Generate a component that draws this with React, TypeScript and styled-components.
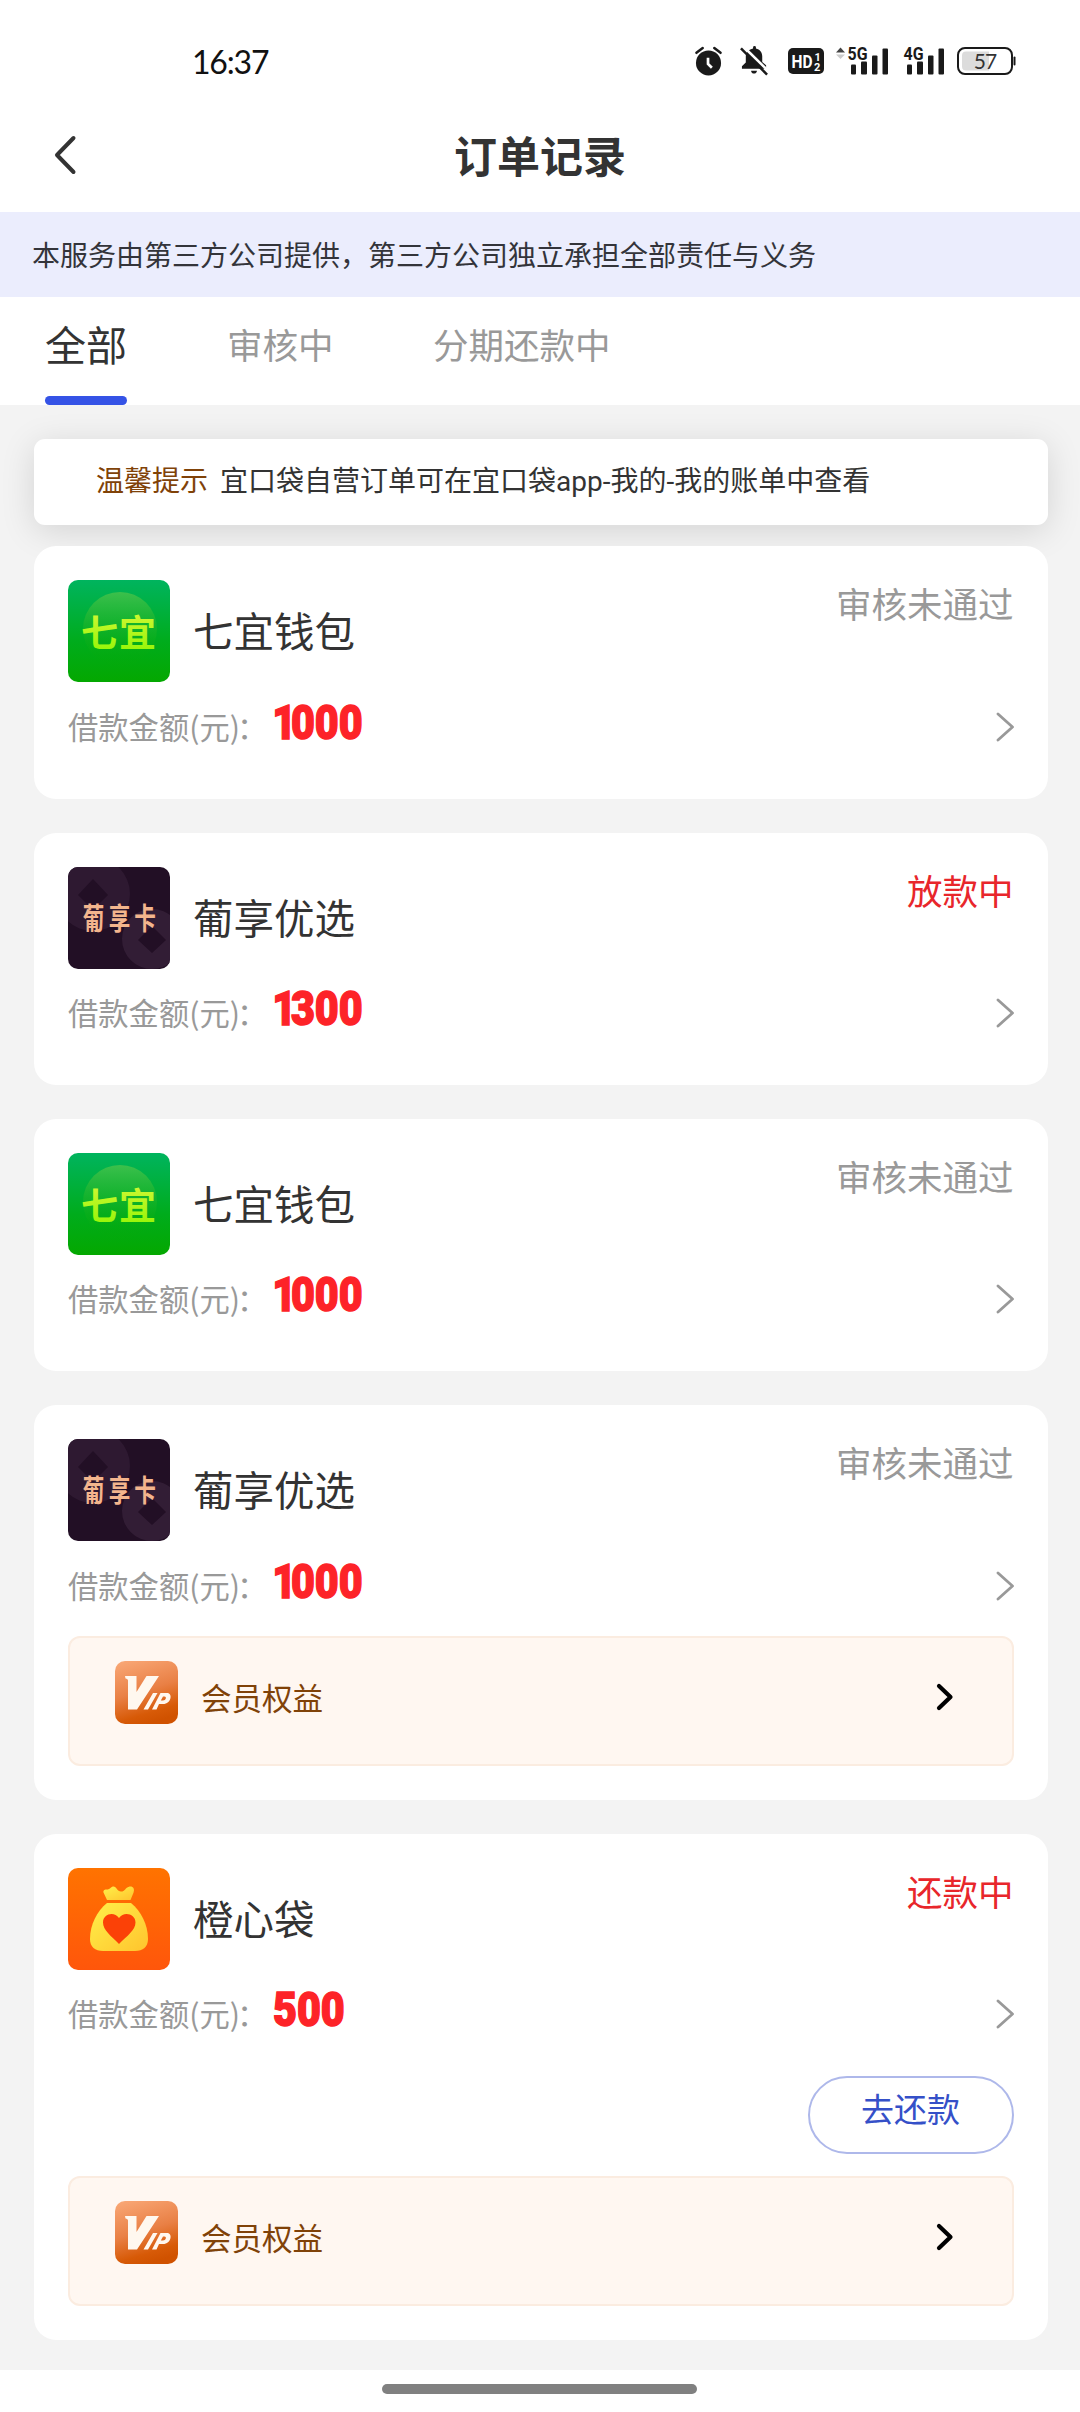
import React from 'react';
import styled, { createGlobalStyle } from 'styled-components';

const FONT = '"Noto Sans CJK SC", "Noto Sans", sans-serif';

const GlobalStyle = createGlobalStyle`
  * { box-sizing: border-box; }
  html, body { margin: 0; padding: 0; background: #fff; }
  body { font-family: ${FONT}; color: #333; }
`;

const Screen = styled.div`
  display: flex;
  flex-direction: column;
  width: 1080px;
  height: 2412px;
  overflow: hidden;
  background: #fff;
`;

const StatusBar = styled.div`
  display: flex;
  align-items: center;
  justify-content: space-between;
  height: 100px;
  padding: 22px 65px 0 192px;
`;

const Clock = styled.span`
  font-family: Lato, ${FONT};
  font-size: 32px;
  line-height: 40px;
  letter-spacing: -1.2px;
  padding-top: 2px;
  color: #111;
`;

const StatusIcons = styled.div`
  display: flex;
  align-items: center;
  svg { display: block; overflow: visible; }
`;

const Spaced = styled.span<{ $left: number }>`
  margin-left: ${(p) => p.$left}px;
`;

const NavBar = styled.header`
  display: grid;
  grid-template-columns: 130px 1fr 130px;
  align-items: center;
  height: 112px;
`;

const BackButton = styled.button`
  display: flex;
  border: 0;
  background: none;
  padding: 0 0 3px 52px;
`;

const Title = styled.h1`
  margin: 0;
  padding-bottom: 5px;
  text-align: center;
  font-size: 43px;
  line-height: 60px;
  font-weight: 700;
  color: #333;
`;

const Banner = styled.div`
  height: 85px;
  padding: 0 32px;
  background: #ebedfd;
  font-size: 28px;
  line-height: 84px;
  color: #33343a;
  white-space: nowrap;
`;

const Tabs = styled.nav`
  display: flex;
  height: 108px;
  padding-left: 45px;
`;

const Tab = styled.div<{ $active?: boolean; $left?: number }>`
  display: flex;
  flex-direction: column;
  justify-content: space-between;
  height: 108px;
  margin-left: ${(p) => p.$left ?? 0}px;
  font-size: ${(p) => (p.$active ? 41 : 35.5)}px;
  line-height: ${(p) => (p.$active ? 92 : 94)}px;
  color: ${(p) => (p.$active ? '#333' : '#999')};
  white-space: nowrap;
`;

const Indicator = styled.span`
  height: 9px;
  border-radius: 5px;
  background: #3553e6;
`;

const Content = styled.main`
  display: flex;
  flex-direction: column;
  height: 1965px;
  padding: 34px 32.5px 0 34px;
  background: #f3f3f3;
`;

const Notice = styled.div`
  display: flex;
  height: 86px;
  padding-left: 62px;
  border-radius: 11px;
  background: #fff;
  box-shadow: 0 6px 34px rgba(0, 0, 0, 0.13);
  font-family: Roboto, ${FONT};
  font-size: 28px;
  line-height: 85px;
  white-space: nowrap;
`;

const NoticeLabel = styled.span`
  color: #804208;
  margin-right: 12px;
`;

const List = styled.div`
  display: flex;
  flex-direction: column;
  gap: 33.75px;
  margin-top: 21.25px;
`;

const Card = styled.article<{ $bottom: number }>`
  display: flex;
  flex-direction: column;
  padding: 34px 34px ${(p) => p.$bottom}px;
  border-radius: 22px;
  background: #fff;
`;

const CardHead = styled.div`
  display: flex;
  align-items: center;
  height: 102px;
`;

const LogoBox = styled.div`
  width: 102px;
  height: 102px;
  border-radius: 10px;
  overflow: hidden;
  svg { display: block; }
`;

const Name = styled.h2`
  margin: 0 0 2px 23px;
  flex: 1;
  font-size: 40.5px;
  line-height: 60px;
  font-weight: 400;
  color: #333;
`;

const Status = styled.span<{ $hot: boolean }>`
  align-self: flex-start;
  font-size: 35.5px;
  line-height: 46px;
  color: ${(p) => (p.$hot ? '#e8262b' : '#999')};
`;

const AmountRow = styled.div`
  display: flex;
  align-items: center;
  height: 92px;
  padding-bottom: 3px;
`;

const AmountLabel = styled.span`
  width: 205px;
  padding-bottom: 2px;
  font-size: 30.3px;
  line-height: 42px;
  color: #999;
  white-space: nowrap;
`;

const Colon = styled.span`
  margin-left: -3px;
`;

const Amount = styled.strong`
  flex: 1;
  margin-bottom: 8px;
  font-family: Roboto, sans-serif;
  font-size: 48px;
  font-weight: 900;
  line-height: 50px;
  color: #fd2328;
  -webkit-text-stroke: 1.5px #fd2328;
  transform: scaleX(0.86);
  transform-origin: left center;
`;

const NarrowOne = styled.span`
  margin-left: -1px;
  letter-spacing: -6px;
`;

const PayButton = styled.button`
  align-self: flex-end;
  width: 206px;
  height: 78px;
  margin: 14px 0 19px;
  padding: 0 0 13px;
  border: 2px solid #aeb8ea;
  border-radius: 39px;
  background: #fff;
  font-family: inherit;
  font-size: 33px;
  line-height: 60px;
  color: #3550c8;
`;

const VipPanel = styled.div`
  display: flex;
  align-items: flex-start;
  height: 130px;
  margin-top: 3px;
  padding: 23px 58px 0 45px;
  border: 2px solid #fbece0;
  border-radius: 12px;
  background: #fff7f1;
`;

const VipText = styled.span`
  flex: 1;
  margin: 14px 0 0 23px;
  font-size: 30.5px;
  line-height: 44px;
  color: #804208;
`;

const VipArrow = styled.span`
  margin-top: 21px;
  svg { display: block; }
`;

const HomeArea = styled.footer`
  display: flex;
  justify-content: center;
  height: 42px;
  padding: 14px 1.5px 0 0;
`;

const HomeBar = styled.span`
  width: 315px;
  height: 10px;
  border-radius: 5px;
  background: #808080;
`;

const INK = '#1a1a1a';

const AlarmIcon = () => (
  <svg width="27" height="30" viewBox="0 0 28 30">
    <circle cx="14" cy="17" r="13" fill={INK} />
    <path d="M1.5 6.5 8 1.5M26.5 6.5 20 1.5" stroke={INK} strokeWidth="2.6" strokeLinecap="round" />
    <path d="M13.500 11.500v6.500l4 4" stroke="#fff" strokeWidth="2.800" fill="none" />
  </svg>
);

const MutedBellIcon = () => (
  <svg width="29" height="30" viewBox="0 0 30 30">
    <path d="M13.500 1a1.500 1.500 0 0 1 3 0v1c4 .8 6.500 4 6.500 8v6l4 3.500V23H2v-2.500l4-4V10c0-4 3.500-7.200 7.500-8zM11.500 25h6c0 1.800-1.300 3-3 3s-3-1.200-3-3z" fill={INK} />
    <path d="M3.500 0 31 27" stroke="#fff" strokeWidth="2.600" />
    <path d="M1 2 28 29" stroke={INK} strokeWidth="2.600" />
  </svg>
);

const HdIcon = () => (
  <svg width="36" height="26" viewBox="0 0 36 26">
    <rect width="36" height="26" rx="5" fill={INK} />
    <g fill="#fff" fontFamily="Roboto, sans-serif" fontWeight="700">
      <text x="3.500" y="20" fontSize="19" textLength="21" lengthAdjust="spacingAndGlyphs">HD</text>
      <text x="26.500" y="12.500" fontSize="11">1</text>
      <text x="26" y="22.500" fontSize="11">2</text>
    </g>
  </svg>
);

const SignalIcon = ({ label, arrows }: { label: string; arrows?: boolean }) => (
  <svg width="53" height="32" viewBox="0 -1 53 32">
    {arrows && <path d="M0 6.500 4.500 1.500 9 6.500z" fill="#444" />}
    {arrows && <path d="M0 8.500 4.500 13 9 8.500z" fill="#ccc" />}
    <g fill={INK}>
      <rect x="15" y="18.500" width="5" height="10" rx="1" />
      <rect x="25" y="15.500" width="6" height="13" rx="1" />
      <rect x="36" y="9.500" width="5.500" height="19" rx="1" />
      <rect x="46.500" y="2.500" width="5.500" height="26" rx="1" />
      <text x="11.500" y="14" fontSize="19" fontFamily="Roboto, sans-serif" fontWeight="700" textLength="20" lengthAdjust="spacingAndGlyphs">{label}</text>
    </g>
  </svg>
);

const BatteryIcon = () => (
  <svg width="58.5" height="28" viewBox="0 0 58.5 28">
    <rect x="1" y="1" width="54" height="26" rx="7" fill="#fff" stroke={INK} strokeWidth="2" />
    <path d="M9 4.500H32v19H9a4 4 0 0 1-4-4v-11a4 4 0 0 1 4-4z" fill="#dcdcdc" />
    <rect x="56.500" y="9.500" width="2" height="9" rx="1" fill={INK} />
    <text x="28" y="21.500" textAnchor="middle" fontFamily="Lato, sans-serif" fontSize="21" letterSpacing="-1" fill="#333">57</text>
  </svg>
);

const BackIcon = () => (
  <svg width="28" height="42" viewBox="0 0 28 42">
    <path d="M21.500 4 5 21 21.500 38" fill="none" stroke="#333" strokeWidth="4" strokeLinecap="round" strokeLinejoin="round" />
  </svg>
);

const RowArrow = () => (
  <svg width="19" height="32" viewBox="0 0 19 32">
    <path d="M3 3 17.500 16 3 29" fill="none" stroke="#999" strokeWidth="2.800" strokeLinecap="round" strokeLinejoin="round" />
  </svg>
);

const PanelArrow = () => (
  <svg width="18" height="30" viewBox="0 0 18 30">
    <path d="M3 4 14.500 15 3 26" fill="none" stroke="#000" strokeWidth="4.200" strokeLinecap="round" strokeLinejoin="round" />
  </svg>
);

const QiyiLogo = () => (
  <svg width="102" height="102" viewBox="0 0 102 102">
    <defs>
      <linearGradient id="qiyi-bg" x1="0" y1="0" x2="0" y2="1">
        <stop offset="0" stopColor="#00b45e" />
        <stop offset="0.6" stopColor="#00ac1c" />
        <stop offset="1" stopColor="#04a800" />
      </linearGradient>
      <linearGradient id="qiyi-disc" x1="0" y1="0" x2="0" y2="1">
        <stop offset="0" stopColor="#3cc04c" />
        <stop offset="0.9" stopColor="#08aa08" stopOpacity="0.1" />
      </linearGradient>
      <linearGradient id="qiyi-ink" x1="0" y1="0" x2="0" y2="1">
        <stop offset="0" stopColor="#dcf83c" />
        <stop offset="1" stopColor="#8cf500" />
      </linearGradient>
    </defs>
    <rect width="102" height="102" fill="url(#qiyi-bg)" />
    <circle cx="52" cy="49" r="37" fill="url(#qiyi-disc)" />
    <text x="13" y="67" fontFamily={FONT} fontSize="37" fontWeight="700" fill="url(#qiyi-ink)" textLength="75" lengthAdjust="spacing">七宜</text>
  </svg>
);

const PuxiangLogo = () => (
  <svg width="102" height="102" viewBox="0 0 102 102">
    <rect width="102" height="102" fill="#220f25" />
    <path fillRule="evenodd" d="M25-10a37 37 0 1 1 0 74 37 37 0 0 1 0-74zM25 12 10 28l15 15 15-15z" fill="#2e1931" />
    <path fillRule="evenodd" d="M84 42a30 30 0 1 1 0 60 30 30 0 0 1 0-60zM84 59 70 73l14 13 14-13z" fill="#321d35" />
    <g fontFamily={FONT} fontWeight="700" fill="#f3b58d" textAnchor="middle">
      <text transform="translate(25.500 62) scale(0.8 1.1)" fontSize="27">葡</text>
      <text transform="translate(51.500 62) scale(0.8 1.1)" fontSize="27">享</text>
      <text transform="translate(77 62) scale(0.8 1.1)" fontSize="27">卡</text>
    </g>
  </svg>
);

const ChengxinLogo = () => (
  <svg width="102" height="102" viewBox="0 0 102 102">
    <defs>
      <linearGradient id="cx-bg" x1="0" y1="0" x2="0" y2="1">
        <stop offset="0" stopColor="#ff7300" />
        <stop offset="1" stopColor="#ff560b" />
      </linearGradient>
      <linearGradient id="cx-bag" x1="0" y1="0" x2="1" y2="1">
        <stop offset="0" stopColor="#fff04a" />
        <stop offset="1" stopColor="#ffc42d" />
      </linearGradient>
    </defs>
    <rect width="102" height="102" fill="url(#cx-bg)" />
    <path d="M39 32 35.500 24.500C35 22 37 21.500 39 21.500c3 0 3.500-2.500 6-3 3.500-.5 4 5 8 5s4.500-4 8-4.800c4-.8 6 2 4.500 6L62.500 32z" fill="url(#cx-bag)" />
    <path d="M39 35H63c10 8 17 22 17 36 0 8-5 12-13 12H35c-8 0-13-4-13-12 0-14 7-28 17-36z" fill="url(#cx-bag)" />
    <path d="M51 76C43 68 35 62 35 54.500 35 46 46 43 51 50c5-7 16.500-4 16.500 4.500C67.500 62 59 68 51 76z" fill="#fb4107" />
  </svg>
);

const VipIcon = () => (
  <svg width="63" height="63" viewBox="0 0 63 63">
    <defs>
      <linearGradient id="vip-bg" x1="0.2" y1="0" x2="0.5" y2="1">
        <stop offset="0" stopColor="#f8a573" />
        <stop offset="0.5" stopColor="#e98045" />
        <stop offset="0.85" stopColor="#d75a07" />
        <stop offset="1" stopColor="#d05200" />
      </linearGradient>
    </defs>
    <rect width="63" height="63" rx="10" fill="url(#vip-bg)" />
    <path d="M10 15H21.500V31L31.500 15H44L22 48.500H13V19.500C13 18 12 18 10.500 17.500zM38 32H42.500L33 48.500H28.500z" fill="#fff8ef" />
    <path fillRule="evenodd" d="M45.500 32H52c6 0 4.500 11-4 11H44L41.500 48.500H37zM48 35.500 45.800 39.500H48c3 0 4-4 1.500-4z" fill="#fff8ef" />
  </svg>
);

type LogoKind = 'qiyi' | 'puxiang' | 'chengxin';

const LOGOS: Record<LogoKind, React.ComponentType> = {
  qiyi: QiyiLogo,
  puxiang: PuxiangLogo,
  chengxin: ChengxinLogo,
};

interface Order {
  logo: LogoKind;
  name: string;
  status: string;
  hot?: boolean;
  amount: string;
  payable?: boolean;
  vip?: boolean;
}

const ORDERS: Order[] = [
  { logo: 'qiyi', name: '七宜钱包', status: '审核未通过', amount: '1000' },
  { logo: 'puxiang', name: '葡享优选', status: '放款中', hot: true, amount: '1300' },
  { logo: 'qiyi', name: '七宜钱包', status: '审核未通过', amount: '1000' },
  { logo: 'puxiang', name: '葡享优选', status: '审核未通过', amount: '1000', vip: true },
  { logo: 'chengxin', name: '橙心袋', status: '还款中', hot: true, amount: '500', payable: true, vip: true },
];

const OrderCard = ({ order }: { order: Order }) => {
  const Logo = LOGOS[order.logo];
  const startsWithOne = order.amount.startsWith('1');
  return (
    <Card $bottom={order.vip ? 34 : 24.5}>
      <CardHead>
        <LogoBox><Logo /></LogoBox>
        <Name>{order.name}</Name>
        <Status $hot={!!order.hot}>{order.status}</Status>
      </CardHead>
      <AmountRow>
        <AmountLabel>借款金额(元)<Colon>：</Colon></AmountLabel>
        <Amount>
          {startsWithOne && <NarrowOne>1</NarrowOne>}
          {startsWithOne ? order.amount.slice(1) : order.amount}
        </Amount>
        <RowArrow />
      </AmountRow>
      {order.payable && <PayButton>去还款</PayButton>}
      {order.vip && (
        <VipPanel>
          <VipIcon />
          <VipText>会员权益</VipText>
          <VipArrow><PanelArrow /></VipArrow>
        </VipPanel>
      )}
    </Card>
  );
};

export default function App() {
  return (
    <Screen>
      <GlobalStyle />
      <StatusBar>
        <Clock>16:37</Clock>
        <StatusIcons>
          <AlarmIcon />
          <Spaced $left={18.5}><MutedBellIcon /></Spaced>
          <Spaced $left={19}><HdIcon /></Spaced>
          <Spaced $left={12}><SignalIcon label="5G" arrows /></Spaced>
          <Spaced $left={2.5}><SignalIcon label="4G" /></Spaced>
          <Spaced $left={12}><BatteryIcon /></Spaced>
        </StatusIcons>
      </StatusBar>
      <NavBar>
        <BackButton aria-label="返回"><BackIcon /></BackButton>
        <Title>订单记录</Title>
      </NavBar>
      <Banner>本服务由第三方公司提供，第三方公司独立承担全部责任与义务</Banner>
      <Tabs>
        <Tab $active>全部<Indicator /></Tab>
        <Tab $left={100}>审核中</Tab>
        <Tab $left={99.5}>分期还款中</Tab>
      </Tabs>
      <Content>
        <Notice>
          <NoticeLabel>温馨提示</NoticeLabel>
          <span>宜口袋自营订单可在宜口袋app-我的-我的账单中查看</span>
        </Notice>
        <List>
          {ORDERS.map((order, i) => <OrderCard key={i} order={order} />)}
        </List>
      </Content>
      <HomeArea><HomeBar /></HomeArea>
    </Screen>
  );
}
